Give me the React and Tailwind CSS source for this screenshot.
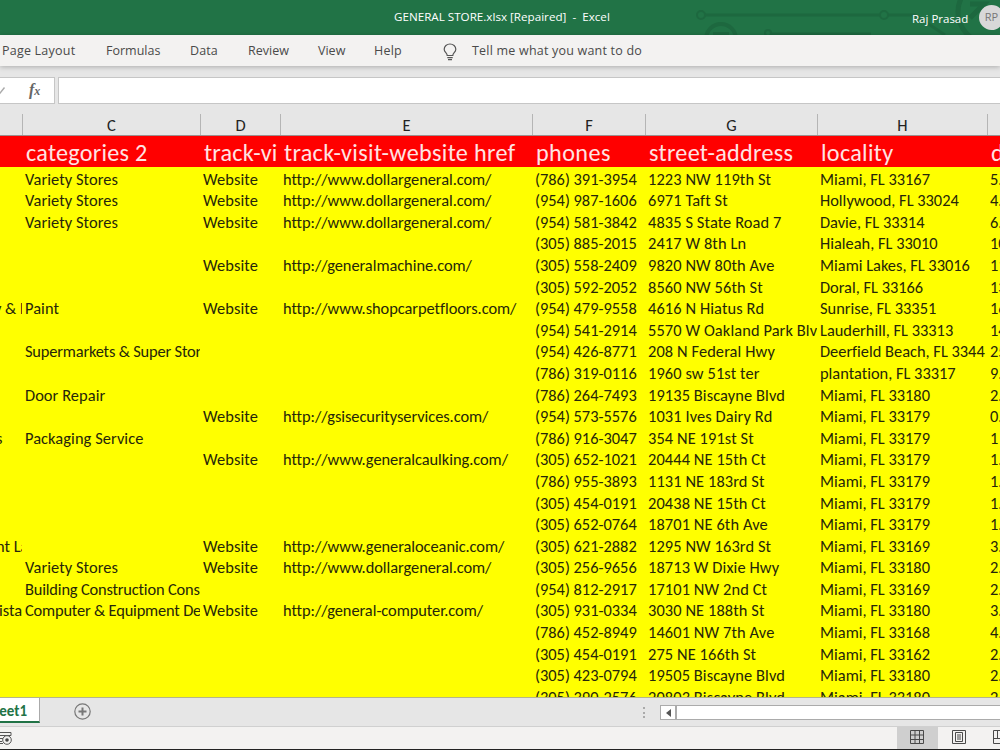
import React from "react";

const MENU = [
  { label: "Page Layout", className: "w-[104px] tracking-[0.22px]" },
  { label: "Formulas", className: "w-[84px]" },
  { label: "Data", className: "w-[58px] tracking-[0.1px]" },
  { label: "Review", className: "w-[70px]" },
  { label: "View", className: "w-[56px]" },
  { label: "Help", className: "w-[69px] tracking-[0.2px]" },
];

const COLUMNS = [
  { key: "C", title: "categories 2", width: "w-[178px]", cell: "pl-[3px] tracking-[0.07px]", head: "tracking-[0.25px]" },
  { key: "D", title: "track-vi", width: "w-[80px]", cell: "pl-[3px] tracking-[0.1px]", head: "tracking-[0.25px]" },
  { key: "E", title: "track-visit-website href", width: "w-[252px]", cell: "pl-[3px] tracking-[-0.05px]", head: "tracking-[0.33px]" },
  { key: "F", title: "phones", width: "w-[113px]", cell: "pl-[3px]", head: "tracking-[0.4px]" },
  { key: "G", title: "street-address", width: "w-[172px]", cell: "pl-[3px] tracking-[0.1px]", head: "tracking-[0.3px]" },
  { key: "H", title: "locality", width: "w-[170px]", cell: "pl-[3px]", head: "tracking-[0.3px]" },
  { key: "I", title: "d", width: "w-[100px]", cell: "pl-[3px]", head: "" },
];

const DG = "http://www.dollargeneral.com/";

// B, C, website href, phone, street, locality, I
const ROWS = [
  ["", "Variety Stores", DG, "(786) 391-3954", "1223 NW 119th St", "Miami, FL 33167", "5."],
  ["", "Variety Stores", DG, "(954) 987-1606", "6971 Taft St", "Hollywood, FL 33024", "4."],
  ["", "Variety Stores", DG, "(954) 581-3842", "4835 S State Road 7", "Davie, FL 33314", "6."],
  ["", "", "", "(305) 885-2015", "2417 W 8th Ln", "Hialeah, FL 33010", "10"],
  ["", "", "http://generalmachine.com/", "(305) 558-2409", "9820 NW 80th Ave", "Miami Lakes, FL 33016", "11"],
  ["", "", "", "(305) 592-2052", "8560 NW 56th St", "Doral, FL 33166", "13"],
  ["y & F", "Paint", "http://www.shopcarpetfloors.com/", "(954) 479-9558", "4616 N Hiatus Rd", "Sunrise, FL 33351", "16"],
  ["", "", "", "(954) 541-2914", "5570 W Oakland Park Blv", "Lauderhill, FL 33313", "14"],
  ["", "Supermarkets & Super Stor", "", "(954) 426-8771", "208 N Federal Hwy", "Deerfield Beach, FL 3344", "25"],
  ["", "", "", "(786) 319-0116", "1960 sw 51st ter", "plantation, FL 33317", "9."],
  ["", "Door Repair", "", "(786) 264-7493", "19135 Biscayne Blvd", "Miami, FL 33180", "2."],
  ["", "", "http://gsisecurityservices.com/", "(954) 573-5576", "1031 Ives Dairy Rd", "Miami, FL 33179", "0."],
  ["s", "Packaging Service", "", "(786) 916-3047", "354 NE 191st St", "Miami, FL 33179", "1"],
  ["", "", "http://www.generalcaulking.com/", "(305) 652-1021", "20444 NE 15th Ct", "Miami, FL 33179", "1."],
  ["", "", "", "(786) 955-3893", "1131 NE 183rd St", "Miami, FL 33179", "1."],
  ["", "", "", "(305) 454-0191", "20438 NE 15th Ct", "Miami, FL 33179", "1."],
  ["", "", "", "(305) 652-0764", "18701 NE 6th Ave", "Miami, FL 33179", "1."],
  ["nt La", "", "http://www.generaloceanic.com/", "(305) 621-2882", "1295 NW 163rd St", "Miami, FL 33169", "3."],
  ["", "Variety Stores", DG, "(305) 256-9656", "18713 W Dixie Hwy", "Miami, FL 33180", "2."],
  ["", "Building Construction Cons", "", "(954) 812-2917", "17101 NW 2nd Ct", "Miami, FL 33169", "2."],
  ["ista", "Computer & Equipment De", "http://general-computer.com/", "(305) 931-0334", "3030 NE 188th St", "Miami, FL 33180", "3."],
  ["", "", "", "(786) 452-8949", "14601 NW 7th Ave", "Miami, FL 33168", "4."],
  ["", "", "", "(305) 454-0191", "275 NE 166th St", "Miami, FL 33162", "2."],
  ["", "", "", "(305) 423-0794", "19505 Biscayne Blvd", "Miami, FL 33180", "2."],
  ["", "", "", "(305) 390-2576", "20803 Biscayne Blvd", "Miami, FL 33180", "2."],
];

// how far the clipped text of column B sits from the window's left edge
const B_OFFSET = { "y & F": "-ml-[6px]", s: "-ml-[4px]", "nt La": "-ml-[4px]", ista: "-ml-[1px]" };

function TitleBar() {
  return (
    <header className="relative flex h-[35px] shrink-0 overflow-hidden bg-[#217346] text-white">
      <svg className="absolute right-0 top-0" width="310" height="35" fill="none" stroke="#1d683f" strokeWidth="2">
        <circle cx="11" cy="15" r="4" />
        <path d="M15 15H190M198 15h27l30 20" strokeWidth="3" />
        <circle cx="194" cy="15" r="4" />
        <circle cx="31" cy="39" r="15" strokeWidth="4" />
        <path d="M23 34h16" strokeWidth="4" />
        <circle cx="78" cy="33" r="3" />
        <path d="M81 34h100" strokeWidth="3" />
        <circle cx="299" cy="12" r="31" strokeWidth="5" />
        <path d="M280 4h14l-14 14" strokeWidth="5" />
      </svg>
      <div className="relative ml-[394px] w-[518px] shrink-0 whitespace-pre pt-[8px] text-[11.65px] leading-[17px]">
        GENERAL STORE.xlsx [Repaired]{"  -  "}Excel
      </div>
      <div className="relative w-[67px] shrink-0 whitespace-nowrap pt-[10px] text-[11.5px] leading-[17px]">Raj Prasad</div>
      <div className="relative mt-[5px] flex size-[25px] shrink-0 items-center justify-center rounded-full bg-[#d8d8d8] text-[11px] text-[#777]">
        RP
      </div>
    </header>
  );
}

function Ribbon() {
  return (
    <nav className="relative z-10 flex h-[31px] shrink-0 items-center bg-[#f3f2f1] pl-[2px] pt-[2px] text-[12.5px] text-[#4a4a4a] shadow-[0_1px_5px_rgba(0,0,0,0.25)]">
      {MENU.map((m) => (
        <span key={m.label} className={`${m.className} shrink-0 whitespace-nowrap`}>
          {m.label}
        </span>
      ))}
      <svg width="14" height="18" viewBox="0 0 14 18" fill="none" stroke="#555" strokeWidth="1.2" className="mr-[15px]">
        <path d="M4.2 12.5C4.2 10 1.2 9.300 1.200 6.200a5.800 5.200 0 0 1 11.600 0c0 3.100-3 3.800-3 6.300zM4.300 14.600h5.400M5 16.700h4" />
      </svg>
      <span className="whitespace-nowrap tracking-[0.21px]">Tell me what you want to do</span>
    </nav>
  );
}

function FormulaBar() {
  return (
    <div className="flex h-[44px] shrink-0 gap-[3px] bg-[#e6e6e6] pt-[11px]">
      <div className="flex h-[27px] w-[55px] items-center border border-l-0 border-[#c6c6c6] bg-white">
        <svg width="6" height="10" viewBox="0 0 6 10" fill="none" stroke="#aaa" strokeWidth="1.4">
          <path d="M-1 8.500L4.500 1.500" />
        </svg>
        <span className="ml-[23px] pb-[2px] font-['Liberation_Serif',serif] text-[16px] font-bold italic leading-none text-[#666]">
          f<span className="text-[12px]">x</span>
        </span>
      </div>
      <div className="h-[27px] flex-1 border border-r-0 border-[#c6c6c6] bg-white" />
    </div>
  );
}

function Cell({ column, children }) {
  // entries that run into the next column are set a little tighter
  const long = column.key === "C" && children.length > 20;
  return (
    <div className={`${column.width} ${column.cell} shrink-0 overflow-hidden whitespace-nowrap`}>
      {long ? <span className="tracking-[-0.17px]">{children}</span> : children}
    </div>
  );
}

function Sheet() {
  return (
    <main className="flex min-h-0 flex-1 flex-col overflow-hidden bg-[#ffff00] font-[Calibri,Carlito,Lato,sans-serif] text-[#26260a] [font-variant-ligatures:none]">
      <div className="flex h-[26px] shrink-0 border-b border-[#9b8f8f] bg-[#e6e6e6] pt-[4px]">
        <div className="w-[23px] shrink-0 border-r border-[#b5b5b5]" />
        {COLUMNS.map((c) => (
          <div key={c.key} className={`${c.width} shrink-0 border-r border-[#b5b5b5] text-center text-[16.5px] leading-[23px] text-[#222]`}>
            {c.key === "I" ? "" : c.key}
          </div>
        ))}
      </div>
      <div className="flex h-[31px] shrink-0 bg-[#ff0000] text-[24.2px] leading-[34px] text-[#ffe3e3]">
        <div className="w-[23px] shrink-0" />
        {COLUMNS.map((c) => (
          <div key={c.key} className={`${c.width} ${c.head} shrink-0 overflow-hidden whitespace-nowrap pl-[3px]`}>
            {c.title}
          </div>
        ))}
      </div>
      <div className="shrink-0 pt-[0.6px] text-[16.4px]">
        {ROWS.map(([b, c, href, phone, street, locality, last], i) => (
          <div key={i} className="flex h-[21.6px] leading-[22px]">
            <div className="w-[22px] shrink-0 overflow-hidden whitespace-nowrap">
              <span className={`inline-block ${B_OFFSET[b] || ""}`}>{b}</span>
            </div>
            <Cell column={COLUMNS[0]}>{c}</Cell>
            <Cell column={COLUMNS[1]}>{href ? "Website" : ""}</Cell>
            <Cell column={COLUMNS[2]}>{href}</Cell>
            <Cell column={COLUMNS[3]}>{phone}</Cell>
            <Cell column={COLUMNS[4]}>{street}</Cell>
            <Cell column={COLUMNS[5]}>{locality}</Cell>
            <Cell column={COLUMNS[6]}>{last}</Cell>
          </div>
        ))}
      </div>
    </main>
  );
}

function SheetTabs() {
  return (
    <div className="flex h-[29px] shrink-0 border-t border-[#b5b58a] bg-[#e6e6e6]">
      <div className="flex h-[25px] w-[40px] shrink-0 justify-end border-b-2 border-r border-b-[#217346] border-r-[#aaa] bg-white pr-[12px] font-[Calibri,Carlito,Lato,sans-serif] text-[15px] font-bold leading-[27px] text-[#217346]">
        Sheet1
      </div>
      <svg className="ml-[33px] mt-[4px]" width="19" height="19" viewBox="0 0 19 19" fill="none" stroke="#777">
        <circle cx="9.500" cy="9.500" r="7.700" strokeWidth="1.2" />
        <path d="M9.500 5.500v8M5.500 9.500h8" strokeWidth="2" />
      </svg>
      <div className="ml-[551px] mt-[9px] flex h-[11px] w-[2px] flex-col justify-between">
        <i className="size-[2px] bg-[#aaa]" />
        <i className="size-[2px] bg-[#aaa]" />
        <i className="size-[2px] bg-[#aaa]" />
      </div>
      <div className="ml-[15px] mt-[7px] flex h-[15px] flex-1 border border-r-0 border-[#ababab] bg-white">
        <div className="flex w-[16px] items-center justify-center border-r-2 border-[#ababab]">
          <svg width="5" height="8" viewBox="0 0 5 8" fill="#555">
            <path d="M5 0v8L0 4z" />
          </svg>
        </div>
      </div>
    </div>
  );
}

function StatusBar() {
  return (
    <footer className="flex h-[24px] shrink-0 overflow-hidden border-b border-t border-b-[#222] border-t-[#d0d0d0] bg-[#f3f2f1]">
      <svg className="mt-[4px] shrink-0" width="12" height="15" viewBox="0 0 12 15" fill="none" stroke="#555">
        <path d="M0 1.500h11v3H0M0 7.500h3M0 10.500h2M0 12.500h3" />
        <circle cx="7" cy="9" r="4.300" fill="#f3f2f1" />
        <circle cx="7" cy="9" r="1.800" fill="#444" stroke="none" />
      </svg>
      <div className="ml-[885px] flex w-[41px] shrink-0 justify-center bg-[#cfcfcf] pr-[2px] pt-[3px]">
        <svg width="14" height="14" viewBox="0 0 14 14" fill="none" stroke="#4a4a4a">
          <path d="M.5.5h13v13H.5zM5 .5v13M9.500.5v13M.5 5h13M.5 9.500h13" />
        </svg>
      </div>
      <svg className="ml-[14px] mt-[3px] shrink-0" width="14" height="14" viewBox="0 0 14 14" fill="none" stroke="#4a4a4a">
        <path d="M.5.5h13v13H.5zM3.500 2.500h7v9h-7zM5 5h4M5 7h4M5 9h4" />
      </svg>
      <svg className="ml-[27px] mt-[3px] shrink-0" width="14" height="14" viewBox="0 0 14 14" fill="none" stroke="#4a4a4a">
        <path d="M.5.5h13v13H.5zM.5 8.500h13M4.500.5v8M9.500.5v8" />
      </svg>
    </footer>
  );
}

export default function App() {
  return (
    <div className="flex h-[750px] w-[1000px] flex-col overflow-hidden font-['Open_Sans',sans-serif]">
      <TitleBar />
      <Ribbon />
      <FormulaBar />
      <Sheet />
      <SheetTabs />
      <StatusBar />
    </div>
  );
}
